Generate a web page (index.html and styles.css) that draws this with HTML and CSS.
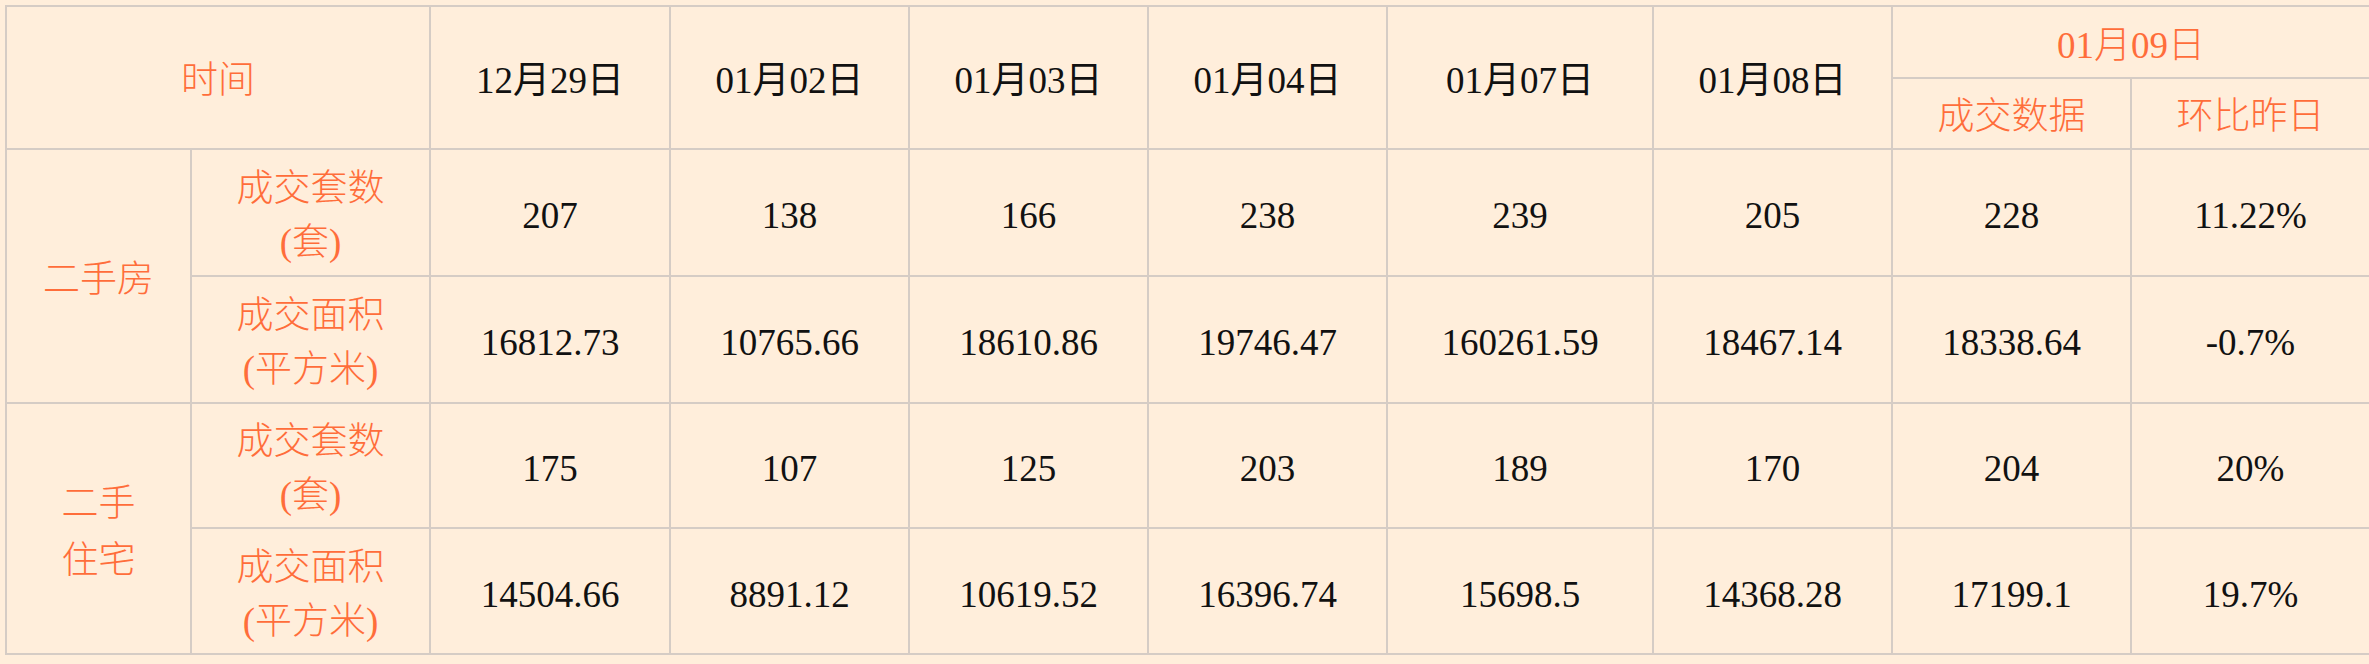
FILE: index.html
```html
<!DOCTYPE html>
<html lang="zh-CN">
<head>
<meta charset="utf-8">
<title>成交数据</title>
<link rel="stylesheet" href="styles.css">
</head>
<body>
<div class="sheet">
  <div class="cell head span-c2 span-r2">时间</div>
  <div class="cell date span-r2">12月29日</div>
  <div class="cell date span-r2">01月02日</div>
  <div class="cell date span-r2">01月03日</div>
  <div class="cell date span-r2">01月04日</div>
  <div class="cell date span-r2">01月07日</div>
  <div class="cell date span-r2">01月08日</div>
  <div class="cell head span-c2">01月09日</div>
  <div class="cell head">成交数据</div>
  <div class="cell head">环比昨日</div>

  <div class="cell head span-r2">二手房</div>
  <div class="cell head">成交套数<br>(套)</div>
  <div class="cell">207</div>
  <div class="cell">138</div>
  <div class="cell">166</div>
  <div class="cell">238</div>
  <div class="cell">239</div>
  <div class="cell">205</div>
  <div class="cell">228</div>
  <div class="cell">11.22%</div>

  <div class="cell head">成交面积<br>(平方米)</div>
  <div class="cell">16812.73</div>
  <div class="cell">10765.66</div>
  <div class="cell">18610.86</div>
  <div class="cell">19746.47</div>
  <div class="cell">160261.59</div>
  <div class="cell">18467.14</div>
  <div class="cell">18338.64</div>
  <div class="cell">-0.7%</div>

  <div class="cell head span-r2 tall">二手<br>住宅</div>
  <div class="cell head">成交套数<br>(套)</div>
  <div class="cell">175</div>
  <div class="cell">107</div>
  <div class="cell">125</div>
  <div class="cell">203</div>
  <div class="cell">189</div>
  <div class="cell">170</div>
  <div class="cell">204</div>
  <div class="cell">20%</div>

  <div class="cell head">成交面积<br>(平方米)</div>
  <div class="cell">14504.66</div>
  <div class="cell">8891.12</div>
  <div class="cell">10619.52</div>
  <div class="cell">16396.74</div>
  <div class="cell">15698.5</div>
  <div class="cell">14368.28</div>
  <div class="cell">17199.1</div>
  <div class="cell">19.7%</div>
</div>
</body>
</html>
```

FILE: styles.css
```css
html, body {
  margin: 0;
  padding: 0;
  overflow: hidden;
  background: #ffeedb;
}

body {
  font-family: "Liberation Serif", "Noto Sans CJK SC", serif;
  font-size: 37px;
  color: #111;
}

.sheet {
  display: grid;
  grid-template-columns: 183px 237px 238px 237px 237px 237px 264px 237px 237px 237px;
  grid-template-rows: 70px 69px 125px 125px 123px 124px;
  gap: 2px;
  padding: 2px;
  margin: 5px 0 0 5px;
  width: max-content;
  background: #d5ccc5;
}

.cell {
  background: #ffeedb;
  display: flex;
  align-items: center;
  justify-content: center;
  text-align: center;
  line-height: 54px;
  white-space: nowrap;
  padding-top: 7px;
  box-sizing: border-box;
}

.head {
  color: #ff6d3a;
  font-weight: 300;
}

.date {
  color: #111;
}

.tall {
  line-height: 57px;
}

.span-c2 {
  grid-column: span 2;
}

.span-r2 {
  grid-row: span 2;
}
```
